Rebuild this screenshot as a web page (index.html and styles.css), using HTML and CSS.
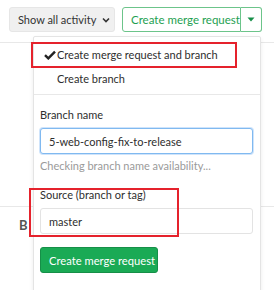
FILE: index.html
```html
<!DOCTYPE html>
<html lang="en">
<head>
  <meta charset="UTF-8" />
  <title>Create merge request</title>
  <link rel="stylesheet" href="styles.css">
</head>
<body>
  <div class="page">
    <div class="top-bar">
      <button class="btn btn-default"><span>Show all activity</span>
        <svg class="chevron" width="8" height="6" viewBox="0 0 8 6"><path d="M1 1.5 L4 4.5 L7 1.5" fill="none" stroke="#333" stroke-width="1.6"/></svg>
      </button>
      <div class="btn-group">
        <button class="btn btn-outline">Create merge request</button>
        <button class="btn btn-outline btn-caret">
          <svg width="8" height="5" viewBox="0 0 8 5"><path d="M0.5 0.5 L7.5 0.5 L4 4.5 Z" fill="#168f48"/></svg>
        </button>
      </div>
    </div>

    <div class="content">
      <div class="rule"></div>
      <div class="table-row"><span class="col-head">B</span></div>
    </div>

    <div class="dropdown">
      <ul class="menu">
        <li class="menu-item">
          <svg class="check" width="12" height="10" viewBox="0 0 12 10"><path d="M1 5.2 L4.3 8.4 L11 1.6" fill="none" stroke="#222" stroke-width="2.4"/></svg>
          Create merge request and branch
        </li>
        <li class="menu-item">Create branch</li>
      </ul>
      <div class="divider"></div>
      <form class="branch-form">
        <label class="field-label">Branch name</label>
        <input class="field focused" type="text" value="5-web-config-fix-to-release">
        <p class="help">Checking branch name availability...</p>
        <label class="field-label second">Source (branch or tag)</label>
        <input class="field" type="text" value="master">
        <button type="button" class="btn btn-success">Create merge request</button>
      </form>
      <div class="mark mark-item"></div>
      <div class="mark mark-source"></div>
    </div>
  </div>
</body>
</html>
```

FILE: styles.css
```css
*, *::before, *::after {
  box-sizing: border-box;
}

* {
  margin: 0;
}

body {
  font-family: Lato, 'Noto Sans', sans-serif;
  font-size: 11px;
  color: #2e2e2e;
  background: #fff;
  white-space: nowrap;
  -webkit-font-smoothing: antialiased;
}

.page {
  position: relative;
  width: 274px;
  height: 290px;
  overflow: hidden;
}

.top-bar {
  display: flex;
  gap: 7px;
  padding: 7px 0 0 9px;
}

.btn {
  font: inherit;
  height: 25px;
  padding: 0 8px;
  border-radius: 3px;
  cursor: pointer;
  display: flex;
  align-items: center;
  white-space: nowrap;
}

.btn-default {
  width: 106px;
  background: #f0f0f0;
  border: 1px solid #e6e6e6;
  color: #333;
  gap: 6px;
}

.chevron {
  flex-shrink: 0;
}

.btn-group {
  display: flex;
}

.btn-outline {
  background: #fff;
  border: 1px solid #6cc48a;
  color: #1d9f51;
  border-radius: 3px 0 0 3px;
  width: 119px;
  font-size: 11.5px;
}

.btn-caret {
  width: 21px;
  border-left: none;
  border-radius: 0 3px 3px 0;
  justify-content: center;
  padding: 0;
}

.content {
  padding-top: 10px;
}

.rule {
  border-top: 1px solid #e8e8e8;
  height: 164px;
}

.table-row {
  border-top: 1px solid #e8e8e8;
  height: 40px;
  padding: 10px 0 0 19px;
}

.col-head {
  font-weight: 700;
  color: #555;
  font-size: 13px;
}

.dropdown {
  position: absolute;
  left: 33px;
  top: 36px;
  width: 228px;
  height: 270px;
  background: #fff;
  border: 1px solid #e4e4e4;
  border-radius: 2px;
  box-shadow: 0 2px 4px rgba(0, 0, 0, 0.08);
}

.menu {
  list-style: none;
  padding: 6px 0 0;
}

.menu-item {
  height: 24px;
  line-height: 24px;
  padding-left: 23px;
  position: relative;
  color: #2e2e2e;
}

.check {
  position: absolute;
  left: 10px;
  top: 7px;
}

.divider {
  border-top: 1px solid #e8e8e8;
  margin-top: 3px;
}

.branch-form {
  padding: 12px 7px 0 6px;
  display: flex;
  flex-direction: column;
  align-items: flex-start;
}

.field-label {
  line-height: 16px;
  color: #2e2e2e;
  margin-bottom: 5px;
}

.field-label.second {
  margin-top: 13px;
}

.field {
  font: inherit;
  width: 100%;
  height: 26px;
  padding: 0 8px;
  border: 1px solid #e3e3e3;
  border-radius: 3px;
  color: #2e2e2e;
  outline: none;
}

.field.focused {
  border-color: #80b9f0;
  box-shadow: 0 0 0 1px #cfe4fb;
}

.help {
  line-height: 16px;
  margin-top: 4px;
  color: #9a9a9a;
}

.btn-success {
  margin-top: 13px;
  width: 118px;
  height: 26px;
  padding: 0 8px;
  background: #1aaa55;
  border: 1px solid #168f48;
  color: #fff;
  font-size: 11.2px;
}

.mark {
  position: absolute;
  border: 2px solid #e5222c;
}

.mark-item {
  left: -3px;
  top: 5px;
  width: 206px;
  height: 26px;
}

.mark-source {
  left: -5px;
  top: 151px;
  width: 150px;
  height: 49px;
}
```
